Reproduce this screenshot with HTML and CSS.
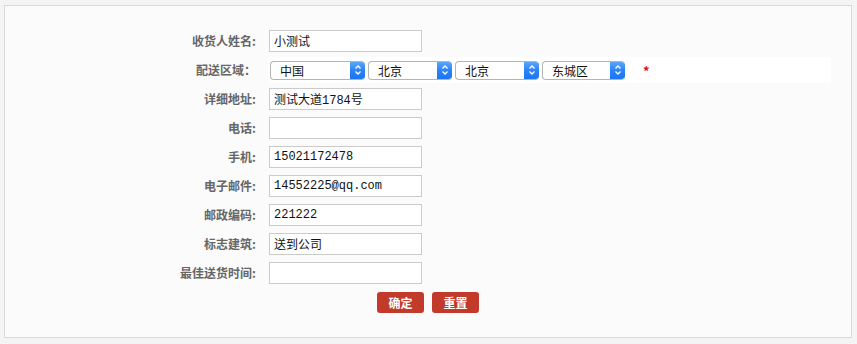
FILE: index.html
```html
<!DOCTYPE html>
<html lang="zh-CN">
<head>
  <meta charset="UTF-8" />
  <title>收货地址</title>
  <link rel="stylesheet" href="styles.css">
</head>
<body>
  <div class="panel">
    <form class="addr-form">
      <div class="row">
        <label>收货人姓名:</label>
        <div class="field"><input type="text" value="小测试" /></div>
      </div>

      <div class="row region">
        <label>配送区域：</label>
        <div class="field">
          <span class="sel w95"><span class="sel-text">中国</span><span class="sel-btn"><svg width="8" height="12" viewBox="0 0 8 12"><path d="M1.5 4.5 4 2 6.5 4.5M1.5 7.5 4 10 6.5 7.5" fill="none" stroke="#fff" stroke-width="1.3"/></svg></span></span>
          <span class="sel w84"><span class="sel-text">北京</span><span class="sel-btn"><svg width="8" height="12" viewBox="0 0 8 12"><path d="M1.5 4.5 4 2 6.5 4.5M1.5 7.5 4 10 6.5 7.5" fill="none" stroke="#fff" stroke-width="1.3"/></svg></span></span>
          <span class="sel w84"><span class="sel-text">北京</span><span class="sel-btn"><svg width="8" height="12" viewBox="0 0 8 12"><path d="M1.5 4.5 4 2 6.5 4.5M1.5 7.5 4 10 6.5 7.5" fill="none" stroke="#fff" stroke-width="1.3"/></svg></span></span>
          <span class="sel w83"><span class="sel-text">东城区</span><span class="sel-btn"><svg width="8" height="12" viewBox="0 0 8 12"><path d="M1.5 4.5 4 2 6.5 4.5M1.5 7.5 4 10 6.5 7.5" fill="none" stroke="#fff" stroke-width="1.3"/></svg></span></span>
          <span class="required">*</span>
        </div>
      </div>

      <div class="row">
        <label>详细地址:</label>
        <div class="field"><input type="text" value="测试大道1784号" /></div>
      </div>
      <div class="row">
        <label>电话:</label>
        <div class="field"><input type="text" value="" /></div>
      </div>
      <div class="row">
        <label>手机:</label>
        <div class="field"><input type="text" value="15021172478" /></div>
      </div>
      <div class="row">
        <label>电子邮件:</label>
        <div class="field"><input type="text" value="14552225@qq.com" /></div>
      </div>
      <div class="row">
        <label>邮政编码:</label>
        <div class="field"><input type="text" value="221222" /></div>
      </div>
      <div class="row">
        <label>标志建筑:</label>
        <div class="field"><input type="text" value="送到公司" /></div>
      </div>
      <div class="row">
        <label>最佳送货时间:</label>
        <div class="field"><input type="text" value="" /></div>
      </div>

      <div class="button-group">
        <button type="button">确定</button>
        <button type="reset">重置</button>
      </div>
    </form>
  </div>
</body>
</html>
```

FILE: styles.css
```css
body {
  margin: 0;
  background: #f4f4f4;
  font-family: "Noto Sans CJK SC", sans-serif;
  font-size: 12px;
}

.panel {
  margin: 5px 5px 0 4px;
  height: 331px;
  border: 1px solid #d9d9d9;
  background: #fbfbfb;
}

.addr-form {
  padding-top: 24px;
}

.row {
  display: flex;
  align-items: center;
  height: 22px;
  margin-bottom: 7px;
}

.row label {
  width: 251px;
  margin-right: 13px;
  text-align: right;
  font-weight: 700;
  color: #666;
  line-height: 22px;
}

.field {
  display: flex;
  align-items: center;
  height: 100%;
}

.field input {
  width: 153px;
  height: 22px;
  box-sizing: border-box;
  margin: 0;
  padding: 0 4px;
  border: 1px solid #cbcbcb;
  background: #fff;
  color: #111;
  font-family: "Liberation Mono", "Noto Sans CJK SC", monospace;
  font-size: 12px;
  outline: none;
}

.row.region {
  height: 26px;
  margin-top: -2px;
  margin-bottom: 5px;
}

.row.region .field {
  width: 561px;
  margin-left: -1px;
  padding-left: 2px;
  background: #fff;
  gap: 3px;
}

.sel {
  display: inline-flex;
  height: 19px;
  box-sizing: border-box;
  border: 1px solid #b4b4b4;
  border-right: none;
  border-radius: 4px;
  background: #fff;
  overflow: hidden;
}

.w95 { width: 95px; }
.w84 { width: 84px; }
.w83 { width: 83px; }

.sel-text {
  flex: 1;
  padding-left: 9px;
  line-height: 17px;
  color: #111;
}

.sel-btn {
  width: 15px;
  display: flex;
  align-items: center;
  justify-content: center;
  margin-top: -1px;
  margin-bottom: -1px;
  background: linear-gradient(#62aaf9, #2b83f6 50%, #1a74f3);
}

.required {
  margin-left: 15px;
  color: #e01010;
  font-weight: 700;
  font-size: 13px;
  line-height: 13px;
}

.button-group {
  display: flex;
  justify-content: center;
  gap: 8px;
  margin-top: 8px;
}

.button-group button {
  width: 47px;
  height: 21px;
  padding: 0;
  border: none;
  border-radius: 3px;
  background: #c23a2a;
  color: #fff;
  font-family: "Noto Sans CJK SC", sans-serif;
  font-weight: 700;
  font-size: 12px;
}
```
